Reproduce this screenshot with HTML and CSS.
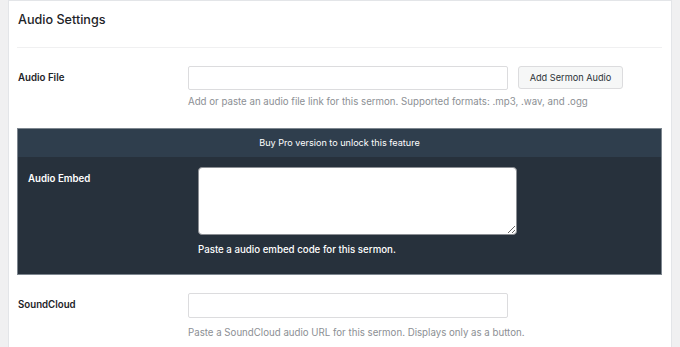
FILE: index.html
```html
<!DOCTYPE html>
<html lang="en">
  <head>
    <meta charset="UTF-8" />
    <meta name="viewport" content="width=device-width, initial-scale=1.0" />
    <title>Audio Settings</title>
    <link rel="stylesheet" href="styles.css">
  </head>
  <body>
    <div class="panel">
      <h2 class="panelTitle">Audio Settings</h2>

      <div class="fieldRow firstRow">
        <label class="fieldLabel" for="audio-file">Audio File</label>
        <div class="fieldBody">
          <div class="inputLine">
            <input type="text" id="audio-file" class="textInput" />
            <button type="button" class="mediaButton">Add Sermon Audio</button>
          </div>
          <p class="fieldHelp">Add or paste an audio file link for this sermon. Supported formats: .mp3, .wav, and .ogg</p>
        </div>
      </div>

      <div class="proBox">
        <div class="proHeader">Buy Pro version to unlock this feature</div>
        <div class="fieldRow proRow">
          <label class="fieldLabel" for="audio-embed">Audio Embed</label>
          <div class="fieldBody">
            <textarea id="audio-embed" class="embedInput"></textarea>
            <p class="fieldHelp proHelp">Paste a audio embed code for this sermon.</p>
          </div>
        </div>
      </div>

      <div class="fieldRow soundRow">
        <label class="fieldLabel" for="soundcloud">SoundCloud</label>
        <div class="fieldBody">
          <input type="text" id="soundcloud" class="textInput" />
          <p class="fieldHelp soundHelp">Paste a SoundCloud audio URL for this sermon. Displays only as a button.</p>
        </div>
      </div>
    </div>
  </body>
</html>
```

FILE: styles.css
```css
html {
  box-sizing: border-box;
  font-family: "Inter", "Roboto", sans-serif;
}

*,
*:before,
*:after {
  box-sizing: inherit;
}

body {
  margin: 0;
  padding: 0;
  background-color: #f0f0f1;
  color: #1d2327;
}

.panel {
  width: 664px;
  margin-left: 8px;
  padding: 0 9px 20px 8px;
  background-color: #fff;
  border: 1px solid #e3e5e8;
}

.panelTitle {
  height: 47px;
  margin: 0;
  padding: 10px 1px 0;
  font-size: 12.6px;
  font-weight: 500;
  line-height: 17px;
  border-bottom: 1px solid #f0f0f1;
}

.fieldRow {
  display: flex;
  flex-direction: row;
  align-items: flex-start;
}

.fieldLabel {
  flex: 0 0 171px;
  padding: 5px 0 0 1px;
  font-size: 9.7px;
  font-weight: 600;
  line-height: 14px;
}

.fieldBody {
  display: flex;
  flex-direction: column;
}

.inputLine {
  display: flex;
  flex-direction: row;
  gap: 10px;
}

.textInput {
  width: 320px;
  height: 24px;
  margin: 0;
  border: 1px solid #dcdcde;
  border-radius: 2px;
  background-color: #fff;
}

.mediaButton {
  width: 105px;
  height: 23px;
  padding: 0;
  border: 1px solid #dcdcde;
  border-radius: 3px;
  background-color: #f6f7f7;
  color: #2c3338;
  font-family: inherit;
  font-size: 9.2px;
}

.fieldHelp {
  margin: 6px 0 0;
  font-size: 9.7px;
  line-height: 12px;
  color: #8c8f94;
}

.firstRow {
  padding-top: 18px;
}

.proBox {
  margin-top: 20px;
  border: 1px solid #7d868f;
  background-color: #27313c;
  color: #fff;
}

.proHeader {
  height: 28px;
  background-color: #2f3e4d;
  font-size: 9.1px;
  line-height: 28px;
  text-align: center;
}

.proRow {
  padding: 10px 10px 18px;
}

.proRow .fieldLabel {
  flex-basis: 170px;
  padding-left: 0;
}

.embedInput {
  display: block;
  width: 319px;
  height: 68px;
  margin: 0;
  border: 1px solid #8c8f94;
  border-radius: 4px;
  background-color: #fff;
  resize: vertical;
}

.proHelp {
  margin-top: 9px;
  font-weight: 500;
  color: #fff;
}

.soundRow {
  padding-top: 18px;
}

.soundRow .textInput {
  height: 25px;
}

.soundHelp {
  margin-top: 9px;
}
```
